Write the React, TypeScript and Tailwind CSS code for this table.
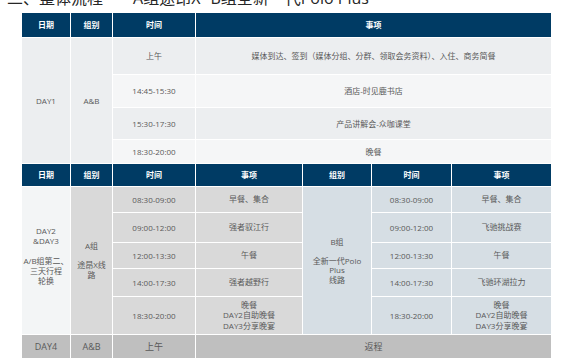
import React from 'react';

const cell = 'flex items-center justify-center text-center';
const head = `${cell} bg-[#003b64] text-white font-bold text-[8px]`;

const day1Rows = [
  { time: '上午', event: '媒体到达、签到（媒体分组、分群、领取会务资料）、入住、商务简餐', bg: 'bg-[#eceef0]' },
  { time: '14:45-15:30', event: '酒店-时见鹿书店', bg: 'bg-[#f5f6f7]' },
  { time: '15:30-17:30', event: '产品讲解会-众咖课堂', bg: 'bg-[#eceef0]' },
  { time: '18:30-20:00', event: '晚餐', bg: 'bg-[#f5f6f7]' },
];

const groupA = [
  { time: '08:30-09:00', event: ['早餐、集合'] },
  { time: '09:00-12:00', event: ['强者驭江行'] },
  { time: '12:00-13:30', event: ['午餐'] },
  { time: '14:00-17:30', event: ['强者越野行'] },
  { time: '18:30-20:00', event: ['晚餐', 'DAY2自助晚餐', 'DAY3分享晚宴'] },
];

const groupB = [
  { time: '08:30-09:00', event: ['早餐、集合'] },
  { time: '09:00-12:00', event: ['飞驰挑战赛'] },
  { time: '12:00-13:30', event: ['午餐'] },
  { time: '14:00-17:30', event: ['飞驰环湖拉力'] },
  { time: '18:30-20:00', event: ['晚餐', 'DAY2自助晚餐', 'DAY3分享晚宴'] },
];

function Lines({ lines }: { lines: string[] }) {
  return (
    <div className="leading-[10.5px]">
      {lines.map((l) => (
        <div key={l}>{l}</div>
      ))}
    </div>
  );
}

export default function App() {
  return (
    <div className="w-[570px] h-[360px] overflow-hidden bg-white font-['Open_Sans','Noto_Sans_CJK_SC',sans-serif] text-[#595959]">
      {/* Title, cut off by the top edge */}
      <div className="-mt-[10px] ml-[7px] h-4 leading-4 text-[16px] text-[#262626] whitespace-nowrap">
        二、整体流程<span className="ml-[30px]">A组途昂X</span>
        <span className="ml-[10px]">B组全新一代Polo Plus</span>
      </div>

      <div className="mt-[7px] ml-[22px] w-[529px] grid gap-px bg-white grid-cols-[48px_41px_82px_106px_68px_79px_99px] grid-rows-[24px_36px_32px_31px_23px_22px_25px_29px_25px_27px_37px_23px] text-[8px]">
        {/* header 1 */}
        <div className={head}>日期</div>
        <div className={head}>组别</div>
        <div className={head}>时间</div>
        <div className={`${head} col-span-4`}>事项</div>

        {/* DAY1 */}
        <div className={`${cell} row-span-4 bg-[#eceef0]`}>DAY1</div>
        <div className={`${cell} row-span-4 bg-[#eceef0]`}>A&amp;B</div>
        {day1Rows.map((r) => (
          <React.Fragment key={r.time}>
            <div className={`${cell} ${r.bg}`}>{r.time}</div>
            <div className={`${cell} ${r.bg} col-span-4`}>{r.event}</div>
          </React.Fragment>
        ))}

        {/* header 2 */}
        <div className={head}>日期</div>
        <div className={head}>组别</div>
        <div className={head}>时间</div>
        <div className={head}>事项</div>
        <div className={head}>组别</div>
        <div className={head}>时间</div>
        <div className={head}>事项</div>

        {/* DAY2 & DAY3 */}
        {groupA.map((a, i) => (
          <React.Fragment key={a.time}>
            {i === 0 && (
              <>
                <div className={`${cell} row-span-5 bg-[#f3f5f6] pb-[9px]`}>
                  <div className="leading-[10px]">
                    <div>DAY2</div>
                    <div>&amp;DAY3</div>
                    <div className="mt-[10px]">A/B组第二、</div>
                    <div>三天行程</div>
                    <div>轮换</div>
                  </div>
                </div>
                <div className={`${cell} row-span-5 bg-[#d9d9d9]`}>
                  <div className="leading-[10px]">
                    <div>A组</div>
                    <div className="mt-[9px]">途昂X线</div>
                    <div>路</div>
                  </div>
                </div>
              </>
            )}
            <div className={`${cell} bg-[#d9d9d9]`}>{a.time}</div>
            <div className={`${cell} bg-[#d9d9d9]`}>
              <Lines lines={a.event} />
            </div>
            {i === 0 && (
              <div className={`${cell} row-span-5 bg-[#d6dee4]`}>
                <div className="leading-[9.5px]">
                  <div>B组</div>
                  <div className="mt-[9px]">全新一代Polo</div>
                  <div>Plus</div>
                  <div>线路</div>
                </div>
              </div>
            )}
            <div className={`${cell} bg-[#d6dee4]`}>{groupB[i].time}</div>
            <div className={`${cell} bg-[#d6dee4]`}>
              <Lines lines={groupB[i].event} />
            </div>
          </React.Fragment>
        ))}

        {/* DAY4 */}
        <div className={`${cell} bg-[#bfbfbf] text-[9px]`}>DAY4</div>
        <div className={`${cell} bg-[#bfbfbf] text-[9px]`}>A&amp;B</div>
        <div className={`${cell} bg-[#bfbfbf] text-[9px]`}>上午</div>
        <div className={`${cell} bg-[#bfbfbf] text-[9px] col-span-4`}>返程</div>
      </div>
    </div>
  );
}
